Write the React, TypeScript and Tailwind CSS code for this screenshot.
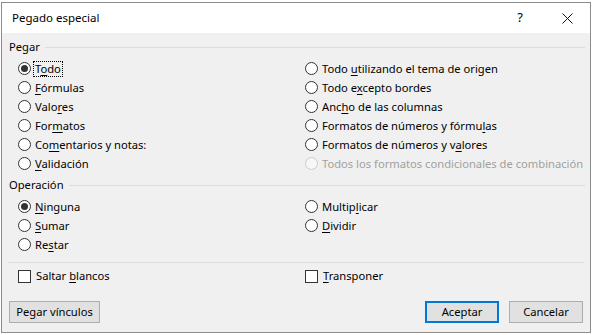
import React from "react";

type Opt = { label: string; checked?: boolean; disabled?: boolean; focus?: boolean; at?: number };

// label with the mnemonic letter underlined
const Mnemonic = ({ label, at }: { label: string; at?: number }) => {
    if (at === undefined) return <>{label}</>;
    return (
        <>
            {label.slice(0, at)}
            <span className="underline underline-offset-[2px] decoration-[1px]">{label[at]}</span>
            {label.slice(at + 1)}
        </>
    );
};

const Radio = ({ label, checked, disabled, focus, at }: Opt) => (
    <div className="h-[19px] flex items-center whitespace-nowrap">
        <span
            className={`w-[13px] h-[13px] rounded-full border flex items-center justify-center shrink-0 ${
                disabled ? "border-[#cccccc] bg-[#f7f7f7]" : "border-[#333333] bg-white"
            }`}
        >
            {checked && <span className="w-[7px] h-[7px] rounded-full bg-[#333333]" />}
        </span>
        <span
            className={`ml-[2px] px-[1px] leading-[14px] border border-dotted ${
                focus ? "border-black" : "border-transparent"
            } ${disabled ? "text-[#a0a0a0]" : "text-black"}`}
        >
            <Mnemonic label={label} at={at} />
        </span>
    </div>
);

const Check = ({ label, at }: { label: string; at?: number }) => (
    <div className="h-[19px] flex items-center whitespace-nowrap">
        <span className="w-[13px] h-[13px] border border-[#333333] bg-white shrink-0" />
        <span className="ml-[5px]">
            <Mnemonic label={label} at={at} />
        </span>
    </div>
);

const GroupHeader = ({ title }: { title: string }) => (
    <div className="h-[20px] flex items-center pl-[7px] pr-[5px]">
        <span>{title}</span>
        <span className="flex-1 h-px bg-[#dcdcdc] ml-[5px]" />
    </div>
);

const Button = ({ label, at, primary, w }: { label: string; at?: number; primary?: boolean; w: string }) => (
    <button
        className={`h-[22px] ${w} bg-[#e1e1e1] flex items-center justify-center ${
            primary ? "border-2 border-[#0078d7]" : "border border-[#adadad]"
        }`}
    >
        <Mnemonic label={label} at={at} />
    </button>
);

export default function App() {
    return (
        <div
            className="w-[593px] h-[335px] bg-white pt-[2px] pl-[1px] text-[11.2px] text-black"
            style={{ fontFamily: '"Noto Sans", "Open Sans", sans-serif' }}
        >
            <div className="w-[590px] h-[331px] border border-[#8c8c8c] flex flex-col bg-[#f0f0f0]">
                {/* title bar */}
                <div className="h-[30px] bg-white flex items-center pl-[10px] shrink-0">
                    <span className="flex-1 text-[11.5px]">Pegado especial</span>
                    <span className="w-[20px] text-center text-[13px] mr-[32px]">?</span>
                    <svg width="11" height="11" viewBox="0 0 11 11" className="mr-[17px]">
                        <path d="M0.5 0.5 L10.5 10.5 M10.5 0.5 L0.5 10.5" stroke="#111" strokeWidth="1" />
                    </svg>
                </div>

                {/* Pegar */}
                <div className="mt-[4px]">
                    <GroupHeader title="Pegar" />
                </div>
                <div className="mt-[2px] grid grid-cols-[287px_1fr] pl-[16px]">
                    <div className="flex flex-col">
                        <Radio label="Todo" at={1} checked focus />
                        <Radio label="Fórmulas" at={0} />
                        <Radio label="Valores" at={4} />
                        <Radio label="Formatos" at={3} />
                        <Radio label="Comentarios y notas:" at={2} />
                        <Radio label="Validación" at={0} />
                    </div>
                    <div className="flex flex-col">
                        <Radio label="Todo utilizando el tema de origen" at={5} />
                        <Radio label="Todo excepto bordes" at={6} />
                        <Radio label="Ancho de las columnas" at={3} />
                        <Radio label="Formatos de números y fórmulas" at={27} />
                        <Radio label="Formatos de números y valores" at={23} />
                        <Radio label="Todos los formatos condicionales de combinación" disabled />
                    </div>
                </div>

                {/* Operación */}
                <div className="mt-[2px]">
                    <GroupHeader title="Operación" />
                </div>
                <div className="mt-[2px] grid grid-cols-[287px_1fr] pl-[16px]">
                    <div className="flex flex-col">
                        <Radio label="Ninguna" at={0} checked />
                        <Radio label="Sumar" at={0} />
                        <Radio label="Restar" at={2} />
                    </div>
                    <div className="flex flex-col">
                        <Radio label="Multiplicar" at={6} />
                        <Radio label="Dividir" at={0} />
                    </div>
                </div>

                <div className="mt-[8px] mx-[6px] h-px bg-[#dcdcdc]" />

                <div className="mt-[4px] grid grid-cols-[287px_1fr] pl-[16px]">
                    <Check label="Saltar blancos" at={7} />
                    <Check label="Transponer" at={0} />
                </div>

                {/* buttons */}
                <div className="mt-[15px] flex items-center pl-[7px] pr-[7px]">
                    <Button label="Pegar vínculos" at={2} w="w-[91px]" />
                    <div className="flex-1" />
                    <Button label="Aceptar" primary w="w-[74px]" />
                    <div className="w-[10px]" />
                    <Button label="Cancelar" w="w-[74px]" />
                </div>
            </div>
        </div>
    );
}
